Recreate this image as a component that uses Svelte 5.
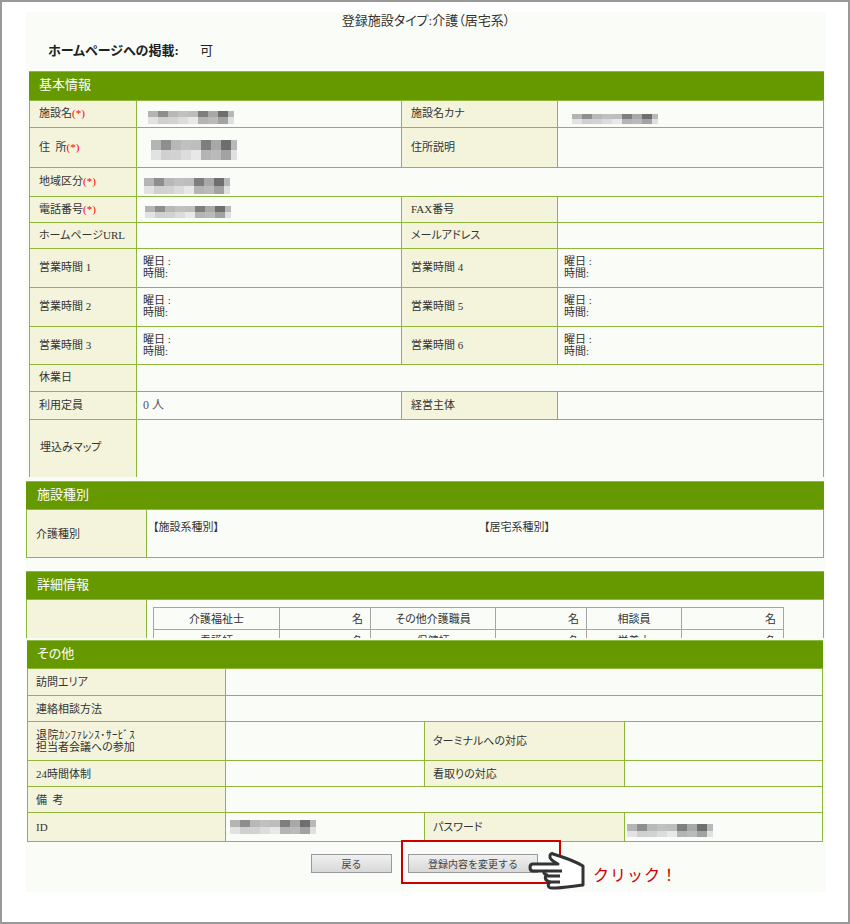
<script>
  // mosaic that hides the personal fields in the screenshot
  const topRow = ['#b4b4b4', '#8e8e8e', '#b8b8b8', '#c0c0c0', '#bdbdbd', '#7e7e7e', '#a8a8a8', '#6e6e6e', '#b8b8b8'];
  const lowRow = ['#e2e2e2', '#d0d0d0', '#d2d2d2', '#dcdcdc', '#e8e8e8', '#b4b4b4', '#bababa', '#a2a2a2', '#e0e0e0'];

  const hoursLeft = [1, 2, 3];
  const rowClass = ['h39', 'h39', 'h38'];
</script>

{#snippet blob(left, top, height)}
  <div class="blob" style="margin-left: {left}px; margin-top: {top}px; height: {height}px">
    {#each topRow as c}<i style="background: {c}"></i>{/each}
    {#each lowRow as c}<i style="background: {c}"></i>{/each}
  </div>
{/snippet}

{#snippet hours()}
  <div class="hours">曜日 :<br />時間:</div>
{/snippet}

<div class="frame">
  <div class="panel">
    <div class="title">登録施設タイプ:介護（居宅系）</div>
    <div class="publish"><b>ホームページへの掲載:</b><span>可</span></div>

    <section class="basic">
      <h3>基本情報</h3>
      <table>
        <colgroup><col class="c107" /><col class="c265" /><col class="c156" /><col /></colgroup>
        <tbody>
          <tr class="h27">
            <th>施設名<em>(*)</em></th>
            <td>{@render blob(5, 6, 13)}</td>
            <th>施設名カナ</th>
            <td>{@render blob(8, 10, 10)}</td>
          </tr>
          <tr class="h40">
            <th>住&nbsp;&nbsp;所<em>(*)</em></th>
            <td>{@render blob(8, 4, 20)}</td>
            <th>住所説明</th>
            <td></td>
          </tr>
          <tr class="h29">
            <th>地域区分<em>(*)</em></th>
            <td colspan="3">{@render blob(1, 8, 16)}</td>
          </tr>
          <tr class="h26">
            <th>電話番号<em>(*)</em></th>
            <td>{@render blob(2, 4, 12)}</td>
            <th>FAX番号</th>
            <td></td>
          </tr>
          <tr class="h26">
            <th>ホームページURL</th>
            <td></td>
            <th>メールアドレス</th>
            <td></td>
          </tr>
          {#each hoursLeft as n, i}
            <tr class={rowClass[i]}>
              <th>営業時間 {n}</th>
              <td>{@render hours()}</td>
              <th>営業時間 {n + 3}</th>
              <td>{@render hours()}</td>
            </tr>
          {/each}
          <tr class="h27">
            <th>休業日</th>
            <td colspan="3"></td>
          </tr>
          <tr class="h28">
            <th>利用定員</th>
            <td class="grey">0 人</td>
            <th>経営主体</th>
            <td></td>
          </tr>
          <tr class="h58">
            <th class="map">埋込みマップ</th>
            <td colspan="3"></td>
          </tr>
        </tbody>
      </table>
    </section>

    <section class="kinds">
      <h3>施設種別</h3>
      <table>
        <colgroup><col class="c120" /><col /></colgroup>
        <tbody>
          <tr class="h48">
            <th>介護種別</th>
            <td class="top">
              <div class="kind-cols">
                <span>【施設系種別】</span>
                <span>【居宅系種別】</span>
              </div>
            </td>
          </tr>
        </tbody>
      </table>
    </section>

    <section class="detail">
      <h3>詳細情報</h3>
      <table>
        <colgroup><col class="c120" /><col /></colgroup>
        <tbody>
          <tr>
            <th></th>
            <td class="top">
              <table class="staff">
                <colgroup>
                  <col class="s126" /><col class="s91" /><col class="s125" />
                  <col class="s91" /><col class="s95" /><col />
                </colgroup>
                <tbody>
                  <tr>
                    <td class="mid">介護福祉士</td><td class="unit">名</td>
                    <td class="mid">その他介護職員</td><td class="unit">名</td>
                    <td class="mid">相談員</td><td class="unit">名</td>
                  </tr>
                  <tr>
                    <td class="mid">看護師</td><td class="unit">名</td>
                    <td class="mid">保健師</td><td class="unit">名</td>
                    <td class="mid">栄養士</td><td class="unit">名</td>
                  </tr>
                </tbody>
              </table>
            </td>
          </tr>
        </tbody>
      </table>
    </section>

    <section class="other">
      <h3>その他</h3>
      <table>
        <colgroup><col class="c198" /><col class="c199" /><col class="c200" /><col /></colgroup>
        <tbody>
          <tr class="h27"><th>訪問エリア</th><td colspan="3"></td></tr>
          <tr class="h26"><th>連絡相談方法</th><td colspan="3"></td></tr>
          <tr class="h39">
            <th class="narrow"><small>退院ｶﾝﾌｧﾚﾝｽ･ｻｰﾋﾞｽ</small><br />担当者会議への参加</th>
            <td></td>
            <th>ターミナルへの対応</th>
            <td></td>
          </tr>
          <tr class="h26">
            <th>24時間体制</th>
            <td></td>
            <th>看取りの対応</th>
            <td></td>
          </tr>
          <tr class="h26"><th>備&nbsp;&nbsp;考</th><td colspan="3"></td></tr>
          <tr class="h29">
            <th>ID</th>
            <td>{@render blob(-2, 0, 14)}</td>
            <th>パスワード</th>
            <td>{@render blob(-4, 7, 13)}</td>
          </tr>
        </tbody>
      </table>
    </section>

    <div class="actions">
      <button class="back" type="button">戻る</button>
      <button class="change" type="button">登録内容を変更する</button>

      <div class="callout"></div>
      <svg class="hand" width="60" height="40" viewBox="0 0 60 40" aria-hidden="true">
        <path
          d="M25 3C35 6 45 9 55 15L55 34C45 35 35 37 24 37C20 37 19 34 22 31C17 30 16 26 19 24C15 23 15 20 18 20L5 20C1 20 1 13 5 13L30 13C25 10 21 8 22 5C22 3 24 2 25 3Z"
          fill="#fff"
          stroke="#333"
          stroke-width="3"
          stroke-linejoin="round"
        />
        <path d="M18 20L34 20M19 25L32 25M22 31L32 31" fill="none" stroke="#333" stroke-width="3" />
      </svg>
      <span class="click">クリック！</span>
    </div>
  </div>
</div>

<style>
  :global(body) {
    margin: 0;
    background: #fff;
  }
  .frame {
    box-sizing: border-box;
    width: 850px;
    height: 924px;
    padding: 10px 0 0 24px;
    border: 2px solid #999;
    font-family: "Liberation Serif", "Noto Sans CJK JP", serif;
    font-size: 11px;
    font-feature-settings: "palt";
    color: #333;
    overflow: hidden;
  }
  .panel {
    width: 800px;
    height: 880px;
    background: #fafcf7;
  }
  .title {
    height: 16px;
    padding-top: 1px;
    font-size: 13px;
    line-height: 16px;
    text-align: center;
  }
  .publish {
    display: flex;
    height: 16px;
    margin: 14px 0 12px 22px;
    font-size: 13px;
    line-height: 16px;
    color: #222;
  }
  .publish b {
    width: 152px;
  }
  h3 {
    box-sizing: border-box;
    height: 29px;
    margin: 0;
    padding-left: 10px;
    background: #669900;
    border-top: 1px solid #8fb84a;
    color: #fff;
    font-size: 13px;
    font-weight: normal;
    line-height: 26px;
  }
  table {
    width: 100%;
    table-layout: fixed;
    border-collapse: collapse;
  }
  th,
  td {
    padding: 0;
    border: 1px solid #8fb83a;
    font-weight: normal;
    text-align: left;
    vertical-align: middle;
    line-height: 12px;
  }
  th {
    padding-left: 9px;
    background: #f4f4dc;
  }
  td {
    padding-left: 6px;
    background: #fafcf7;
  }
  td.top {
    vertical-align: top;
  }
  td.grey {
    color: #555;
    font-size: 12px;
    padding-bottom: 1px;
  }
  .basic th {
    padding-bottom: 2px;
  }
  .basic th.map {
    padding: 0 0 4px 10px;
  }
  em {
    font-style: normal;
    color: #f00;
  }
  .hours {
    padding-bottom: 2px;
  }
  .blob {
    display: grid;
    grid-template-columns: repeat(9, 10px);
    grid-template-rows: 1fr 1fr;
    width: 86px;
    overflow: hidden;
  }
  .blob i {
    display: block;
  }

  .h26 { height: 26px; }
  .h27 { height: 27px; }
  .h28 { height: 28px; }
  .h29 { height: 29px; }
  .h38 { height: 38px; }
  .h39 { height: 39px; }
  .h40 { height: 40px; }
  .h48 { height: 48px; }
  .h58 { height: 58px; }

  .c107 { width: 107px; }
  .c265 { width: 265px; }
  .c156 { width: 156px; }
  .c120 { width: 120px; }
  .c198 { width: 198px; }
  .c199 { width: 199px; }
  .c200 { width: 200px; }

  .basic {
    width: 795px;
    margin-left: 3px;
    height: 406px;
    overflow: hidden;
  }
  .kinds {
    width: 798px;
    margin-top: 4px;
  }
  .kinds table,
  .detail > table,
  .other table {
    margin-top: -1px;
  }
  .kinds h3,
  .detail h3 {
    padding-left: 11px;
  }
  .kind-cols {
    display: grid;
    grid-template-columns: 331px 1fr;
    padding-top: 11px;
  }
  .detail {
    width: 798px;
    height: 67px;
    margin-top: 13px;
    overflow: hidden;
  }
  .detail > table > tbody > tr > td {
    height: 60px;
    padding: 7px 0 0 6px;
  }
  .staff {
    width: 631px;
  }
  .staff td {
    height: 21px;
    padding: 0;
    border: 1px solid #a6a6a6;
    font-size: 11px;
  }
  .staff .mid {
    text-align: center;
  }
  .staff .unit {
    padding-right: 7px;
    text-align: right;
  }
  .s126 { width: 126px; }
  .s91 { width: 91px; }
  .s125 { width: 125px; }
  .s95 { width: 95px; }

  .other {
    width: 796px;
    margin: 2px 0 0 1px;
  }
  .other th {
    padding-left: 8px;
  }
  .other th.narrow small {
    font-size: 11px;
    font-feature-settings: normal;
    letter-spacing: 0.4px;
  }
  .actions {
    position: relative;
    display: flex;
    gap: 16px;
    padding: 12px 0 0 285px;
  }
  button {
    box-sizing: border-box;
    height: 19px;
    padding: 0;
    border: 1px solid #999;
    background: linear-gradient(#f0f0f0, #d8d8d8);
    color: #444;
    font: 10px "Liberation Serif", "Noto Sans CJK JP", serif;
  }
  .back {
    width: 81px;
  }
  .change {
    width: 130px;
  }
  .callout {
    position: absolute;
    left: 375px;
    top: -2px;
    box-sizing: border-box;
    width: 160px;
    height: 44px;
    border: 2px solid #c00;
  }
  .hand {
    position: absolute;
    left: 502px;
    top: 9px;
  }
  .click {
    position: absolute;
    left: 567px;
    top: 21px;
    color: #c00;
    font-family: "Noto Sans CJK JP", sans-serif;
    font-size: 16px;
    font-feature-settings: normal;
    line-height: 22px;
    letter-spacing: 1px;
  }
</style>
